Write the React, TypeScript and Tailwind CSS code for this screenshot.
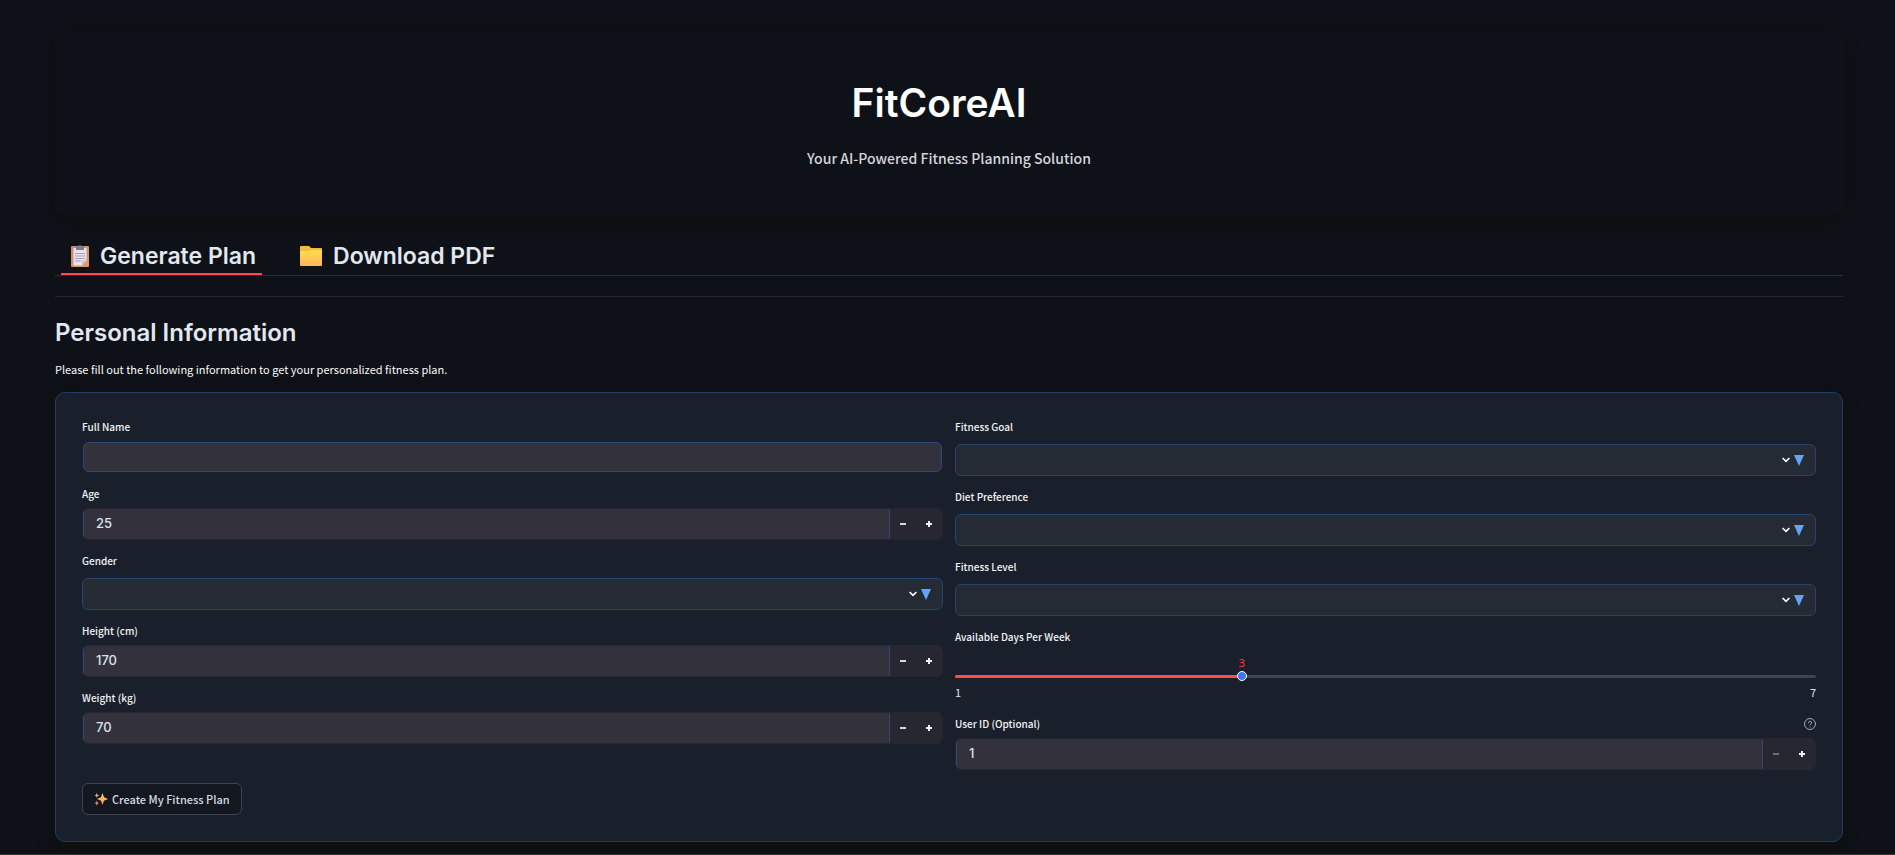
import { useState } from "react";

const BODY = "font-['Noto_Sans_CJK_SC',sans-serif]";
const HEAD = "font-['Inter',sans-serif]";

const labelCls = "block text-[10px] leading-5 font-medium text-[#f2f3f5]";

function ClipboardIcon() {
  return (
    <svg viewBox="0 0 18 22" className="h-[22px] w-[18px]" aria-hidden="true">
      <defs>
        <linearGradient id="board" x1="0" y1="0" x2="1" y2="1">
          <stop offset="0" stopColor="#c98a68" />
          <stop offset="1" stopColor="#e29a5e" />
        </linearGradient>
      </defs>
      <rect x="0" y="1" width="18" height="21" rx="1" fill="url(#board)" />
      <path d="M2.500 3h13v12.500l-4.500 5H2.500z" fill="#e9e2f4" />
      <path d="M15.500 15.500H11v5z" fill="#c7bdda" />
      <path d="M5 1.500h2.500a1.500 1.500 0 0 1 3 0H13V5H5z" fill="#83798c" />
      <path d="M4 8.500h10M4 11h10M4 13.500h10M4 16h6" stroke="#a79db5" strokeWidth="1" />
    </svg>
  );
}

function FolderIcon() {
  return (
    <svg viewBox="0 0 22 20" className="h-5 w-[22px]" aria-hidden="true">
      <defs>
        <linearGradient id="folder" x1="0" y1="0" x2="0" y2="1">
          <stop offset="0" stopColor="#ffdd4e" />
          <stop offset="1" stopColor="#ffb55c" />
        </linearGradient>
      </defs>
      <path d="M0 1a1 1 0 0 1 1-1h8l2 2h10a1 1 0 0 1 1 1v8H0z" fill="#f9b83c" />
      <path d="M0 5h9l2-1h11V19a1 1 0 0 1-1 1H1a1 1 0 0 1-1-1z" fill="url(#folder)" />
    </svg>
  );
}

function SparklesIcon() {
  return (
    <svg viewBox="0 0 14 14" className="h-[14px] w-[14px]" aria-hidden="true">
      <defs>
        <linearGradient id="spark" x1="0" y1="0" x2="0" y2="1">
          <stop offset="0" stopColor="#ffd65c" />
          <stop offset="1" stopColor="#ff8f62" />
        </linearGradient>
      </defs>
      <path d="M8.500 1L10 5.300L14 7L10 8.700L8.500 13L7 8.700L3 7L7 5.300z" fill="url(#spark)" />
      <path d="M2.800 .8L3.500 2.700L5.300 3.400L3.500 4.100L2.800 6L2.100 4.100L.3 3.400L2.100 2.700z" fill="#ffb95c" />
      <path d="M2.800 8.500L3.500 10.400L5.300 11.100L3.500 11.800L2.800 13.700L2.100 11.800L.3 11.100L2.100 10.400z" fill="#ff8f5c" />
    </svg>
  );
}

function TextField({ id, label }: { id: string; label: string }) {
  return (
    <div>
      <label htmlFor={id} className={`${labelCls} mb-1`}>{label}</label>
      <div className="h-8 p-px">
        <input id={id} type="text" className="h-full w-full rounded-md border border-[#2f4778] bg-[#33323c] px-3 text-[13px] text-[#e2e8f0] outline-none" />
      </div>
    </div>
  );
}

type NumberProps = { id: string; label: string; initial: number; min?: number; help?: boolean };

function NumberField({ id, label, initial, min = 0, help }: NumberProps) {
  const [value, setValue] = useState(initial);
  return (
    <div>
      <div className="mb-1 flex items-center justify-between">
        <label htmlFor={id} className={labelCls}>{label}</label>
        {help && (
          <svg viewBox="0 0 24 24" className="h-3 w-3" fill="none" stroke="#a3a8b0" strokeWidth="2" strokeLinecap="round" strokeLinejoin="round">
            <circle cx="12" cy="12" r="11" />
            <path d="M9 9a3 3 0 0 1 6 1c0 2-3 2.500-3 4M12 18h.01" />
          </svg>
        )}
      </div>
      <div className="flex h-8 overflow-hidden rounded-md border border-[#262730] bg-[#262730]">
        <input
          id={id}
          type="text"
          inputMode="numeric"
          value={value}
          onChange={(e) => setValue(Number(e.target.value) || min)}
          className={`${HEAD} min-w-0 flex-1 border-x border-[#2f4778] bg-[#33323c] px-3 text-[13px] font-medium text-[#dbe1ea] outline-none`}
        />
        <button type="button" aria-label={`Decrease ${label}`} disabled={value <= min} onClick={() => setValue(value - 1)} className="flex w-[26px] items-center justify-center text-[#d8d9dc] disabled:text-[#6b6f79]">
          <svg viewBox="0 0 8 8" className="h-2 w-2" fill="none" stroke="currentColor" strokeWidth="2">
            <path d="M1 4h6" />
          </svg>
        </button>
        <button type="button" aria-label={`Increase ${label}`} onClick={() => setValue(value + 1)} className="flex w-[26px] items-center justify-center text-[#f0f0f2]">
          <svg viewBox="0 0 8 8" className="h-2 w-2" fill="none" stroke="currentColor" strokeWidth="2">
            <path d="M1 4h6M4 1v6" />
          </svg>
        </button>
      </div>
    </div>
  );
}

function SelectField({ id, label, options }: { id: string; label: string; options: string[] }) {
  return (
    <div>
      <label htmlFor={id} className={`${labelCls} mb-[7px]`}>{label}</label>
      <div className="relative">
        <select id={id} defaultValue="" className="block h-8 w-full appearance-none rounded-md border border-[#27436f] bg-[#242b35] px-3 text-[13px] text-[#e2e8f0] outline-none">
          <option value="" />
          {options.map((o) => (
            <option key={o}>{o}</option>
          ))}
        </select>
        <div className="pointer-events-none absolute inset-y-0 right-3 flex items-center gap-1">
          <svg viewBox="0 0 8 6" className="h-[6px] w-2" fill="none" stroke="#fff" strokeWidth="1.6">
            <path d="M.6 1L4 4.400L7.400 1" />
          </svg>
          <svg viewBox="0 0 10 11" className="h-[11px] w-[10px]">
            <path d="M0 0h10L5 11z" fill="#60a5fa" />
          </svg>
        </div>
      </div>
    </div>
  );
}

function DaysSlider() {
  const [days, setDays] = useState(3);
  const pct = ((days - 1) / 6) * 100;
  return (
    <div>
      <label htmlFor="days" className={`${labelCls} mb-1`}>Available Days Per Week</label>
      <div className="h-[52px] pt-5">
        <div className="relative h-[10px]">
          <div className="absolute inset-x-0 top-[4px] h-[3px] rounded-full bg-[#3d4550]" />
          <div className="absolute left-0 top-[4px] h-[3px] rounded-full bg-[#ff4b4b]" style={{ width: `${pct}%` }} />
          <div className="absolute top-0 h-[10px] w-[10px] -translate-x-1/2 rounded-full border border-white bg-[#3b78f0]" style={{ left: `${pct}%` }} />
          <span className="absolute -top-[15px] -translate-x-1/2 font-['Noto_Sans',sans-serif] text-[11px] leading-[14px] text-[#e2484a]" style={{ left: `${pct}%` }}>
            {days}
          </span>
          <input id="days" type="range" min={1} max={7} value={days} onChange={(e) => setDays(Number(e.target.value))} className="absolute inset-0 h-full w-full cursor-pointer opacity-0" />
        </div>
        <div className="mt-[3px] flex justify-between text-[11px] leading-4 text-[#dfe3e8]">
          <span>1</span>
          <span>7</span>
        </div>
      </div>
    </div>
  );
}

export default function App() {
  const [tab, setTab] = useState("plan");
  const tabCls = `${HEAD} flex h-[42px] items-center gap-[11px] border-b-2 pt-[6px] pr-[6px] pl-[10px] text-[23px] font-semibold text-[#e2e8f0]`;

  return (
    <div className={`${BODY} min-h-screen border-b border-[#37363a] bg-[#0e1117] pt-8 pr-[52px] pl-[55px] text-[#fafafa]`}>
      <header className="flex h-[183px] flex-col items-center rounded-xl pt-[47px] shadow-[0_4px_16px_rgba(14,14,10,0.6)]">
        <h1 className={`${HEAD} pr-5 text-[39px] leading-[48px] font-semibold text-white`}>FitCoreAI</h1>
        <p className="mt-[19px] text-[14px] leading-6 font-medium text-[#d4d6d9]">Your AI-Powered Fitness Planning Solution</p>
      </header>

      <nav className="mt-[18px] flex gap-7 border-b border-[#1d2f52] px-[6px]">
        <button type="button" onClick={() => setTab("plan")} className={`${tabCls} ${tab === "plan" ? "border-[#ff4b4b]" : "border-transparent"}`}>
          <ClipboardIcon />
          Generate Plan
        </button>
        <button type="button" onClick={() => setTab("pdf")} className={`${tabCls} ${tab === "pdf" ? "border-[#ff4b4b]" : "border-transparent"}`}>
          <FolderIcon />
          Download PDF
        </button>
      </nav>

      <hr className="mt-5 border-[#26292f]" />

      <h2 className={`${HEAD} mt-5 text-[24px] leading-8 font-semibold text-[#e2e8f0]`}>Personal Information</h2>
      <p className="mt-[10px] text-[11px] leading-5">Please fill out the following information to get your personalized fitness plan.</p>

      <form
        onSubmit={(e) => e.preventDefault()}
        className="mt-[13px] rounded-[10px] border border-[#213c68] bg-[#19202b] px-[26px] pt-6 pb-[26px] shadow-[0_4px_16px_rgba(14,14,10,0.9)]"
      >
        <div className="grid grid-cols-2 gap-x-3">
          <div className="flex flex-col gap-[11px]">
            <TextField id="name" label="Full Name" />
            <NumberField id="age" label="Age" initial={25} />
            <SelectField id="gender" label="Gender" options={["Male", "Female", "Other"]} />
            <NumberField id="height" label="Height (cm)" initial={170} />
            <NumberField id="weight" label="Weight (kg)" initial={70} />
          </div>
          <div className="flex flex-col gap-[11px]">
            <SelectField id="goal" label="Fitness Goal" options={["Weight Loss", "Muscle Gain", "Endurance"]} />
            <SelectField id="diet" label="Diet Preference" options={["Vegetarian", "Vegan", "Keto"]} />
            <SelectField id="level" label="Fitness Level" options={["Beginner", "Intermediate", "Advanced"]} />
            <DaysSlider />
            <NumberField id="user" label="User ID (Optional)" initial={1} min={1} help />
          </div>
        </div>
        <button type="submit" className="mt-[13px] flex h-8 items-center gap-1 rounded-md border border-[#41444c] bg-[#13171f] px-[11px] text-[11px] font-medium text-[#d5dae2]">
          <SparklesIcon />
          Create My Fitness Plan
        </button>
      </form>
    </div>
  );
}
